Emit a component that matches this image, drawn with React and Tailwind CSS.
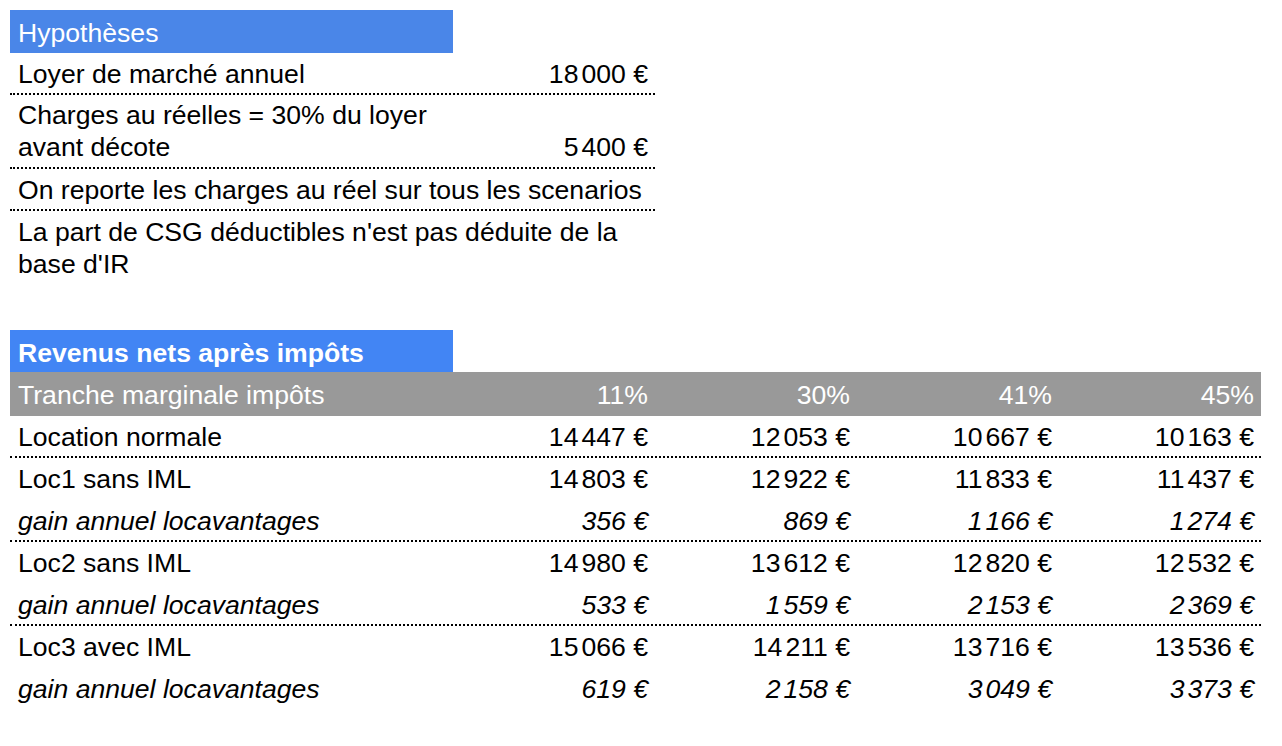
const NB = "\u202f";

function Num({ v }) {
  const parts = v.split(NB);
  return (
    <>
      {parts.map((p, i) => (
        <span key={i} className={i ? "ml-[3px]" : ""}>
          {p}
        </span>
      ))}
    </>
  );
}

const rows = [
  { label: "Location normale", vals: ["14\u202f447 €", "12\u202f053 €", "10\u202f667 €", "10\u202f163 €"], line: true },
  { label: "Loc1 sans IML", vals: ["14\u202f803 €", "12\u202f922 €", "11\u202f833 €", "11\u202f437 €"] },
  { label: "gain annuel locavantages", vals: ["356 €", "869 €", "1\u202f166 €", "1\u202f274 €"], italic: true, line: true },
  { label: "Loc2 sans IML", vals: ["14\u202f980 €", "13\u202f612 €", "12\u202f820 €", "12\u202f532 €"] },
  { label: "gain annuel locavantages", vals: ["533 €", "1\u202f559 €", "2\u202f153 €", "2\u202f369 €"], italic: true, line: true },
  { label: "Loc3 avec IML", vals: ["15\u202f066 €", "14\u202f211 €", "13\u202f716 €", "13\u202f536 €"] },
  { label: "gain annuel locavantages", vals: ["619 €", "2\u202f158 €", "3\u202f049 €", "3\u202f373 €"], italic: true },
];

export default function App() {
  return (
    <div className="min-h-screen bg-white p-[10px] font-['Liberation_Sans',Arial,sans-serif] text-[26.6px] leading-[32px] text-black">
      {/* Hypothèses */}
      <div className="w-[645px]">
        <div className="w-[443px] h-[43px] bg-[#4a86e8] text-white px-2 pt-[2px] flex items-center">
          Hypothèses
        </div>
        <div className="grid grid-cols-[443px_202px] h-[42px] items-center pt-[2px] border-b-2 border-dotted border-black">
          <div className="px-2">Loyer de marché annuel</div>
          <div className="px-[7px] text-right">
            <Num v={"18\u202f000 €"} />
          </div>
        </div>
        <div className="grid grid-cols-[443px_202px] h-[74px] items-end pb-[4px] border-b-2 border-dotted border-black">
          <div className="px-2">
            Charges au réelles = 30% du loyer
            <br />
            avant décote
          </div>
          <div className="px-[7px] text-right">
            <Num v={"5\u202f400 €"} />
          </div>
        </div>
        <div className="h-[42px] flex items-center pt-[2px] px-2 whitespace-nowrap border-b-2 border-dotted border-black">
          On reporte les charges au réel sur tous les scenarios
        </div>
        <div className="h-[74px] flex items-center px-2 whitespace-nowrap">
          <div>
            La part de CSG déductibles n'est pas déduite de la
            <br />
            base d'IR
          </div>
        </div>
      </div>

      {/* Revenus */}
      <div className="mt-[45px] w-[1251px]">
        <div className="w-[443px] h-[42px] bg-[#4285f4] text-white font-bold px-2 pt-[3px] flex items-center">
          Revenus nets après impôts
        </div>
        <div className="grid grid-cols-[443px_202px_202px_202px_202px] h-[44px] items-center pt-[2px] bg-[#999999] text-white">
          <div className="px-2">Tranche marginale impôts</div>
          {["11%", "30%", "41%", "45%"].map((t) => (
            <div key={t} className="px-[7px] text-right">
              {t}
            </div>
          ))}
        </div>
        {rows.map((r, i) => (
          <div
            key={i}
            className={`grid grid-cols-[443px_202px_202px_202px_202px] h-[42px] items-center ${
              r.line ? "pt-[2px] border-b-2 border-dotted border-black" : ""
            } ${r.italic ? "italic" : ""}`}
          >
            <div className="px-2">{r.label}</div>
            {r.vals.map((v, j) => (
              <div key={j} className="px-[7px] text-right">
                <Num v={v} />
              </div>
            ))}
          </div>
        ))}
      </div>
    </div>
  );
}
